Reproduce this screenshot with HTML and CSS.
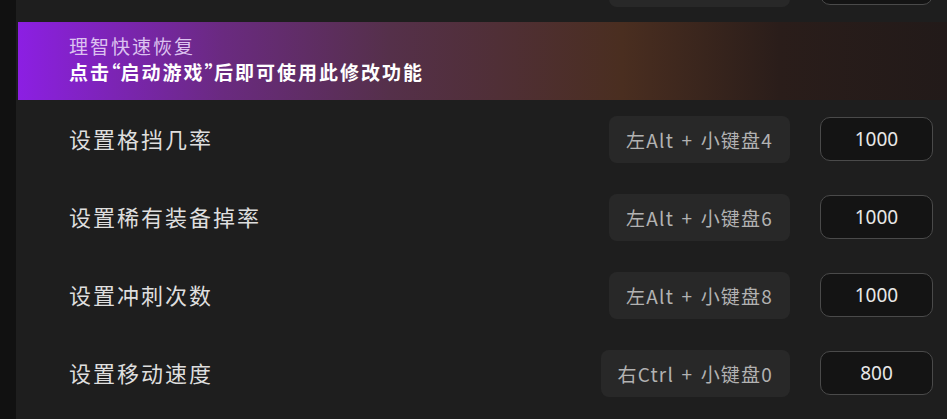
FILE: index.html
```html
<!DOCTYPE html>
<html lang="zh-CN">
<head>
  <meta charset="UTF-8">
  <meta name="viewport" content="width=device-width, initial-scale=1.0">
  <title>修改功能</title>
  <link rel="stylesheet" href="styles.css">
</head>
<body>
  <div class="app">
    <div class="side"></div>
    <div class="main">
      <div class="list">
        <div class="row">
          <span class="label">设置攻击倍率</span>
          <span class="keys">左Alt + 小键盘2</span>
          <input class="value" type="text" value="1000">
        </div>

        <div class="banner">
          <div class="banner-title">理智快速恢复</div>
          <div class="banner-tip">点击<span class="q">“</span>启动游戏<span class="q">”</span>后即可使用此修改功能</div>
        </div>

        <div class="row">
          <span class="label">设置格挡几率</span>
          <span class="keys">左Alt + 小键盘4</span>
          <input class="value" type="text" value="1000">
        </div>
        <div class="row">
          <span class="label">设置稀有装备掉率</span>
          <span class="keys">左Alt + 小键盘6</span>
          <input class="value" type="text" value="1000">
        </div>
        <div class="row">
          <span class="label">设置冲刺次数</span>
          <span class="keys">左Alt + 小键盘8</span>
          <input class="value" type="text" value="1000">
        </div>
        <div class="row">
          <span class="label">设置移动速度</span>
          <span class="keys">右Ctrl + 小键盘0</span>
          <input class="value" type="text" value="800">
        </div>
      </div>
    </div>
  </div>
</body>
</html>
```

FILE: styles.css
```css
body {
  margin: 0;
  background: #1e1e1e;
  font-family: "Noto Sans CJK SC", "Noto Sans", sans-serif;
  overflow: hidden;
}

.app {
  display: flex;
  height: 419px;
}

.side {
  width: 16px;
  background: #111111;
  flex-shrink: 0;
}

.main {
  flex: 1;
  background: #1e1e1e;
  overflow: hidden;
}

.list {
  margin-top: -56px;
}

.row {
  display: flex;
  align-items: center;
  height: 78px;
  padding: 0 14px 0 53px;
}

.label {
  flex: 1;
  font-size: 22px;
  letter-spacing: 2px;
  color: #dedede;
  margin-top: -2px;
}

.keys {
  display: flex;
  align-items: center;
  height: 47px;
  padding: 0 17px;
  border-radius: 8px;
  background: #282828;
  color: #b2b2b2;
  font-size: 19px;
  letter-spacing: 1.2px;
  word-spacing: 2px;
  margin-right: 30px;
}

.value {
  box-sizing: border-box;
  width: 113px;
  height: 44px;
  border: 1px solid #4a4a4a;
  border-radius: 10px;
  background: #141414;
  color: #e8e8e8;
  font-family: "Noto Sans", sans-serif;
  font-size: 19px;
  text-align: center;
  outline: none;
  padding: 0;
}

/* 提示横幅 */
.banner {
  margin-left: 2px;
  height: 78px;
  box-sizing: border-box;
  padding: 11px 0 0 51px;
  background: linear-gradient(to right, #8c1fe3 0%, #6a2a80 22%, #55304a 40%, #4a2e20 65%, #2a1d1a 82%, #221a19 100%);
}

.banner-title {
  font-size: 19px;
  letter-spacing: 2px;
  line-height: 25px;
  color: #dcc2f0;
}

.banner-tip {
  font-size: 19px;
  line-height: 27px;
  letter-spacing: 2px;
  font-weight: bold;
  color: #ffffff;
}

.q {
  font-feature-settings: "halt" 1;
  letter-spacing: 0;
}
```
